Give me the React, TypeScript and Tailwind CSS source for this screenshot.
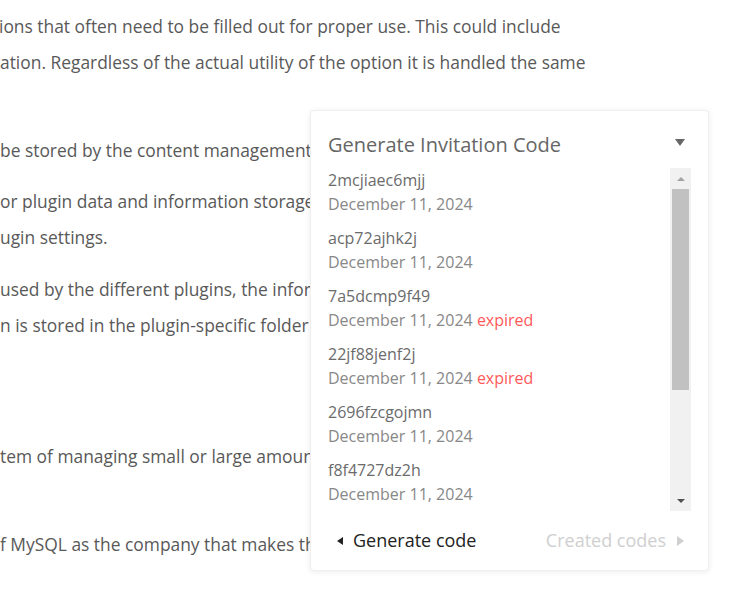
import React from 'react';

const codes = [
  { code: '2mcjiaec6mjj', date: 'December 11, 2024', expired: false },
  { code: 'acp72ajhk2j', date: 'December 11, 2024', expired: false },
  { code: '7a5dcmp9f49', date: 'December 11, 2024', expired: true },
  { code: '22jf88jenf2j', date: 'December 11, 2024', expired: true },
  { code: '2696fzcgojmn', date: 'December 11, 2024', expired: false },
  { code: 'f8f4727dz2h', date: 'December 11, 2024', expired: false },
  { code: 'k3p9xw71dqa', date: 'December 11, 2024', expired: false },
];

export default function App() {
  return (
    <div
      className="relative w-[750px] h-[600px] overflow-hidden bg-white text-[#595959]"
      style={{ fontFamily: '"Open Sans", "Noto Sans", sans-serif' }}
    >
      {/* page text behind the popover */}
      <div className="pt-[8px] leading-[36px] text-[17.4px] whitespace-nowrap">
        <p className="-ml-[1px]">ions that often need to be filled out for proper use. This could include</p>
        <p>ation. Regardless of the actual utility of the option it is handled the same</p>
        <p className="mt-[52px]">be stored by the content management system</p>
        <p className="mt-[15px]">or plugin data and information storage, the</p>
        <p>ugin settings.</p>
        <p className="mt-[16px]">used by the different plugins, the information</p>
        <p>n is stored in the plugin-specific folder</p>
        <p className="mt-[95px]">tem of managing small or large amounts</p>
        <p className="mt-[52px]">f MySQL as the company that makes the</p>
      </div>

      {/* popover */}
      <div className="absolute left-[310px] top-[110px] w-[399px] h-[461px] bg-white rounded-[4px] border border-[#efefef] shadow-[0_1px_6px_rgba(0,0,0,0.08)] flex flex-col">
        <div className="flex items-center justify-between pl-[17px] pr-[23px] pt-[10px] h-[57px]">
          <span className="text-[20px] text-[#666]">Generate Invitation Code</span>
          <span className="w-0 h-0 border-l-[5px] border-r-[5px] border-t-[7px] border-l-transparent border-r-transparent border-t-[#666] -mt-[4px]" />
        </div>

        <div className="flex ml-[17px] mr-[17px] h-[343px]">
          <div className="flex-1 overflow-hidden flex flex-col gap-[10px]">
            {codes.map((c) => (
              <div key={c.code} className="leading-[24px] text-[16px]">
                <div className="text-[#6b6b6b]">{c.code}</div>
                <div className="text-[#888]">
                  {c.date}
                  {c.expired && <span className="text-[#ff5a5a]"> expired</span>}
                </div>
              </div>
            ))}
          </div>
          <div className="w-[21px] bg-[#f1f1f1] flex flex-col items-center">
            <div className="h-[21px] flex items-center justify-center">
              <span className="w-0 h-0 border-l-[4px] border-r-[4px] border-b-[4px] border-l-transparent border-r-transparent border-b-[#a3a3a3]" />
            </div>
            <div className="w-[17px] h-[201px] bg-[#c1c1c1]" />
            <div className="flex-1" />
            <div className="h-[21px] flex items-center justify-center">
              <span className="w-0 h-0 border-l-[4px] border-r-[4px] border-t-[4px] border-l-transparent border-r-transparent border-t-[#505050]" />
            </div>
          </div>
        </div>

        <div className="flex items-center justify-between pl-[26px] pr-[24px] mt-[16px] text-[18px]">
          <button className="flex items-center gap-[10px] text-[#222]">
            <span className="w-0 h-0 border-t-[4px] border-b-[4px] border-r-[6px] border-t-transparent border-b-transparent border-r-[#222]" />
            Generate code
          </button>
          <button className="flex items-center gap-[11px] text-[#cfcfcf]">
            Created codes
            <span className="w-0 h-0 border-t-[5px] border-b-[5px] border-l-[7px] border-t-transparent border-b-transparent border-l-[#cfcfcf]" />
          </button>
        </div>
      </div>
    </div>
  );
}
